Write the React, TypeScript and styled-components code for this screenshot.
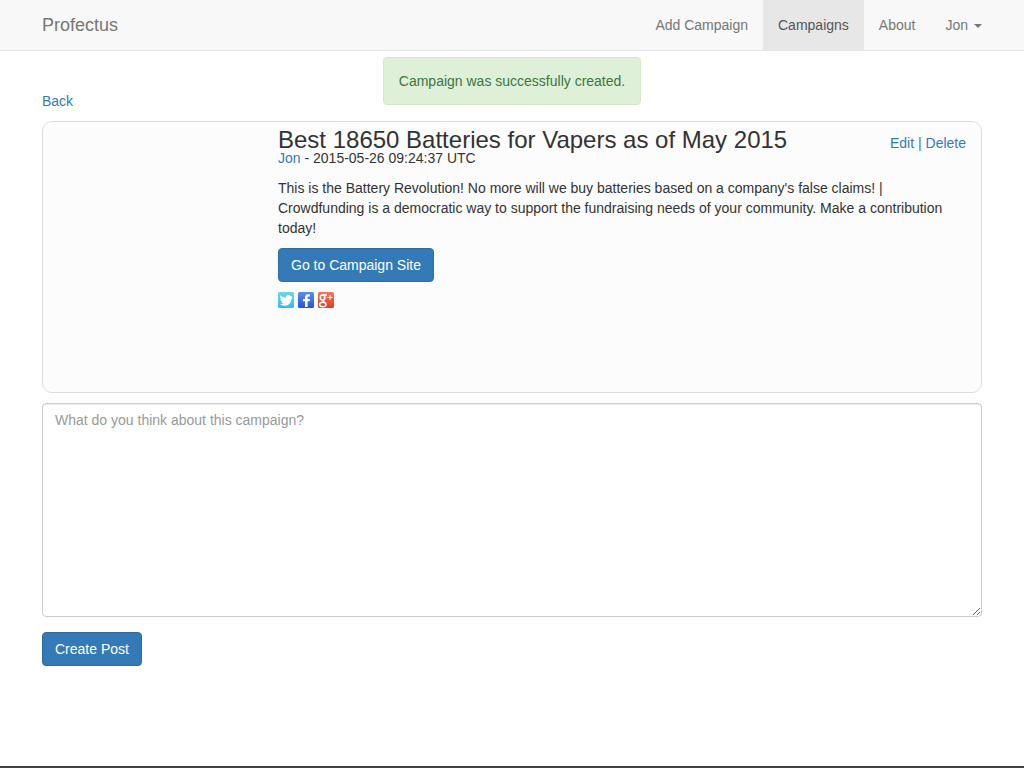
import React from "react";
import styled, { createGlobalStyle } from "styled-components";

const GlobalStyle = createGlobalStyle`
  *, *::before, *::after { box-sizing: border-box; }
  body {
    margin: 0;
    background: #fff;
    color: #333;
    font-family: "Liberation Sans", Arial, sans-serif;
    font-size: 14px;
    line-height: 20px;
  }
`;

const Page = styled.div`
  display: flex;
  flex-direction: column;
  min-height: 100vh;
`;

const Container = styled.div`
  width: 100%;
  max-width: 970px;
  margin: 0 auto;
  padding: 0 15px;
`;

const Navbar = styled.header`
  background: #f8f8f8;
  border-bottom: 1px solid #e7e7e7;
`;

const NavbarInner = styled(Container)`
  display: flex;
  justify-content: space-between;
`;

const Brand = styled.a`
  padding: 15px 0;
  color: #777;
  font-size: 18px;
  text-decoration: none;
`;

const NavList = styled.nav`
  display: flex;
  margin-right: -15px;
`;

const NavLink = styled.a<{ $active?: boolean }>`
  padding: 15px;
  color: ${(p) => (p.$active ? "#555" : "#777")};
  background: ${(p) => (p.$active ? "#e7e7e7" : "transparent")};
  text-decoration: none;
`;

const MenuButton = styled.button`
  display: flex;
  align-items: center;
  gap: 6px;
  padding: 15px;
  border: 0;
  background: transparent;
  color: #777;
  font: inherit;
  cursor: pointer;
`;

const Caret = styled.span`
  margin-top: 2px;
  border-top: 4px solid currentColor;
  border-left: 4px solid transparent;
  border-right: 4px solid transparent;
`;

const Main = styled(Container).attrs({ as: "main" })`
  flex: 1;
  padding-top: 6px;
  padding-bottom: 20px;
`;

const Link = styled.a`
  color: #337ab7;
  text-decoration: none;
  &:hover { text-decoration: underline; }
`;

const TopRow = styled.div`
  display: grid;
  grid-template-columns: 1fr auto 1fr;
  min-height: 54px;
  margin-bottom: 10px;
`;

const BackCell = styled.div`
  align-self: end;
`;

const Alert = styled.div`
  align-self: start;
  padding: 13px 15px;
  border: 1px solid #d6e9c6;
  border-radius: 4px;
  background: #dff0d8;
  color: #3c763d;
`;

const Card = styled.article`
  display: grid;
  grid-template-columns: 220px 1fr;
  min-height: 272px;
  padding: 5px 15px;
  border: 1px solid #ddd;
  border-radius: 10px;
  background: #fcfcfc;
`;

const Details = styled.div`
  grid-column: 2;
`;

const TitleRow = styled.div`
  display: flex;
  justify-content: space-between;
  align-items: flex-end;
  margin-bottom: -5px;
`;

const Title = styled.h3`
  margin: 0;
  font-size: 24px;
  font-weight: 400;
  line-height: 26px;
`;

const Actions = styled.div`
  color: #337ab7;
`;

const Description = styled.p`
  margin: 10px 0;
`;

const Button = styled.button`
  display: block;
  padding: 6px 12px;
  border: 1px solid #2e6da4;
  border-radius: 4px;
  background: #337ab7;
  color: #fff;
  font: inherit;
  cursor: pointer;
`;

const ShareLinks = styled.div`
  display: flex;
  gap: 4px;
  margin-top: 10px;
`;

const ShareLink = styled.a`
  display: block;
  height: 16px;
  svg { display: block; }
`;

const CommentBox = styled.textarea`
  display: block;
  width: 100%;
  height: 214px;
  margin: 10px 0 15px;
  padding: 6px 12px;
  border: 1px solid #ccc;
  border-radius: 4px;
  background: #fff;
  box-shadow: inset 0 1px 1px rgba(0, 0, 0, 0.075);
  color: #555;
  font: inherit;
  resize: vertical;
  &::placeholder { color: #999; }
`;

const Footer = styled.footer`
  height: 2px;
  background: linear-gradient(#3c3c3c, #484848);
`;

function TwitterIcon() {
  return (
    <svg width="16" height="16" viewBox="0 0 16 16" aria-hidden="true">
      <defs>
        <linearGradient id="tw" x1="0" y1="0" x2="0" y2="1">
          <stop offset="0" stopColor="#6fd4f0" />
          <stop offset="1" stopColor="#2bbfe6" />
        </linearGradient>
      </defs>
      <rect width="16" height="16" rx="1.5" fill="url(#tw)" />
      <path
        fill="#fff"
        d="M2.400 3.200C3.800 4.700 5.500 5.500 7.500 5.900 7.600 4.200 8.900 3 10.500 3c1 0 1.900.4 2.400 1.200l1.700.3-1.100 1.200 1 .5-1.200.8c0 3.900-2.600 6.700-6.300 6.700-2.100 0-3.700-.6-4.900-1.800 1.400.2 2.500 0 3.500-.7-1.300-.2-2-.8-2.500-1.800l1.100-.1C2.900 8.900 2.200 8.100 2 6.800l1.200.3C2.200 6.100 1.800 4.700 2.400 3.200z"
      />
    </svg>
  );
}

function FacebookIcon() {
  return (
    <svg width="16" height="16" viewBox="0 0 16 16" aria-hidden="true">
      <defs>
        <linearGradient id="fb" x1="0" y1="0" x2="0" y2="1">
          <stop offset="0" stopColor="#5b8df0" />
          <stop offset="1" stopColor="#2455d6" />
        </linearGradient>
      </defs>
      <rect width="16" height="16" rx="1.5" fill="url(#fb)" />
      <path
        fill="#fff"
        d="M7 15V9.300H5V7h2V5.400C7 3.300 8.200 2.300 10.200 2.300H12v2.300h-1.200c-.9 0-1.200.4-1.200 1.100V7H12l-.3 2.300H9.600V15z"
      />
    </svg>
  );
}

function GooglePlusIcon() {
  return (
    <svg width="16" height="16" viewBox="0 0 16 16" aria-hidden="true">
      <defs>
        <linearGradient id="gp" x1="0" y1="0" x2="0" y2="1">
          <stop offset="0" stopColor="#f0785f" />
          <stop offset="1" stopColor="#dc3f26" />
        </linearGradient>
      </defs>
      <rect width="16" height="16" rx="1.5" fill="url(#gp)" />
      <g fill="none" stroke="#fff">
        <ellipse cx="4.500" cy="5.600" rx="2.200" ry="2.500" strokeWidth="1.500" />
        <path d="M4.500 3H9M6.300 4c1.100 1.400.8 3-.4 3.900-1.200.9-.6 1.500.6 2.500" strokeWidth="1.300" />
        <ellipse cx="4.800" cy="12.500" rx="3.200" ry="2.300" strokeWidth="1.500" />
        <path d="M9.500 5.500h5M12 3v5" strokeWidth="1" />
      </g>
    </svg>
  );
}

export default function App() {
  return (
    <Page>
      <GlobalStyle />
      <Navbar>
        <NavbarInner>
          <Brand href="#">Profectus</Brand>
          <NavList>
            <NavLink href="#">Add Campaign</NavLink>
            <NavLink href="#" $active aria-current="page">Campaigns</NavLink>
            <NavLink href="#">About</NavLink>
            <MenuButton type="button" aria-haspopup="menu">
              Jon
              <Caret />
            </MenuButton>
          </NavList>
        </NavbarInner>
      </Navbar>

      <Main>
        <TopRow>
          <BackCell>
            <Link href="#">Back</Link>
          </BackCell>
          <Alert role="status">Campaign was successfully created.</Alert>
        </TopRow>

        <Card>
          <Details>
            <TitleRow>
              <Title>Best 18650 Batteries for Vapers as of May 2015</Title>
              <Actions>
                <Link href="#">Edit</Link> | <Link href="#">Delete</Link>
              </Actions>
            </TitleRow>
            <div>
              <Link href="#">Jon</Link> - 2015-05-26 09:24:37 UTC
            </div>
            <Description>
              This is the Battery Revolution! No more will we buy batteries based on a
              company's false claims! | Crowdfunding is a democratic way to support the
              fundraising needs of your community. Make a contribution today!
            </Description>
            <Button type="button">Go to Campaign Site</Button>
            <ShareLinks>
              <ShareLink href="#" aria-label="Twitter"><TwitterIcon /></ShareLink>
              <ShareLink href="#" aria-label="Facebook"><FacebookIcon /></ShareLink>
              <ShareLink href="#" aria-label="Google+"><GooglePlusIcon /></ShareLink>
            </ShareLinks>
          </Details>
        </Card>

        <form onSubmit={(e) => e.preventDefault()}>
          <CommentBox
            aria-label="Comment"
            placeholder="What do you think about this campaign?"
          />
          <Button type="submit">Create Post</Button>
        </form>
      </Main>
      <Footer />
    </Page>
  );
}
